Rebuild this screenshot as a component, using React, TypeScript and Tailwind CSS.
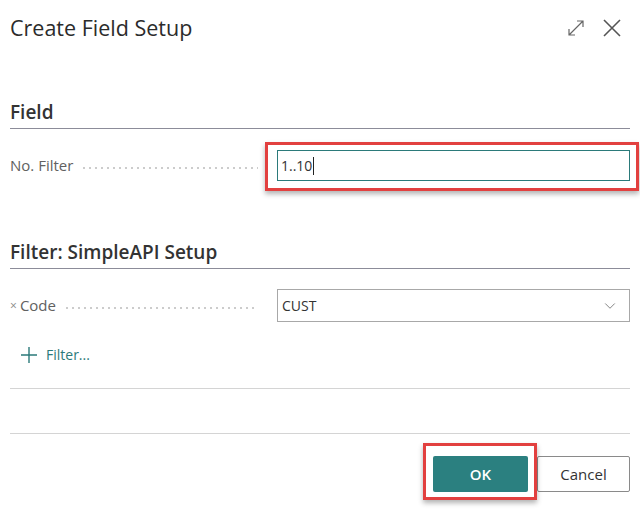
import { ChevronDown } from "lucide-react"

const font = { fontFamily: '"Open Sans", "Noto Sans", Arial, sans-serif' }

const Leader = () => (
	<span className="ml-[8px] mt-[4px] h-[2px] flex-1 bg-[radial-gradient(circle,#cccccc_0.8px,transparent_1px)] bg-[length:6px_2px] bg-repeat-x" />
)

const FieldRow = ({ label, children }: { label: React.ReactNode; children: React.ReactNode }) => (
	<div className="flex items-center">
		<div className="flex w-[248px] items-center text-[15px] text-[#616161]">
			{label}
			<Leader />
		</div>
		<div className="ml-[19px] flex-1">{children}</div>
	</div>
)

const SectionHeader = ({ title }: { title: string }) => (
	<div className="border-b border-[#8c8c99] pb-[4px] text-[19px] font-semibold leading-[24px] text-[#333]">
		{title}
	</div>
)

export default function App() {
	return (
		<div style={font} className="h-[520px] w-[640px] overflow-hidden bg-white px-[10px]">
			<div className="flex items-center justify-between pt-[15px]">
				<h1 className="text-[21.5px] leading-[26px] text-[#2b2b2b]">Create Field Setup</h1>
				<div className="flex items-center gap-[16px] pr-[8px] text-[#666]">
					<svg width="20" height="20" viewBox="0 0 20 20" fill="none" stroke="currentColor" strokeWidth="1.2">
						<path d="M3 17 L17 3 M11 3 H17 V9 M3 11 V17 H9" />
					</svg>
					<svg width="20" height="20" viewBox="0 0 20 20" fill="none" stroke="#555" strokeWidth="1.6">
						<path d="M2 2 L18 18 M18 2 L2 18" />
					</svg>
				</div>
			</div>

			<div className="mt-[59px]">
				<SectionHeader title="Field" />
			</div>

			<div className="mt-[21px]">
				<FieldRow label="No. Filter">
					<div className="relative">
						<div className="flex h-[31px] items-center border border-[#2b7a7a] px-[3px] text-[14px] text-[#333]">
							1..10
							<span className="ml-[1px] h-[18px] w-[1px] bg-[#222]" />
						</div>
						<span className="pointer-events-none absolute -top-[8px] -bottom-[10px] -left-[12px] -right-[9px] border-[3px] border-[#e2403f] shadow-[0_3px_5px_rgba(0,0,0,0.3)]" />
					</div>
				</FieldRow>
			</div>

			<div className="mt-[59px]">
				<SectionHeader title="Filter: SimpleAPI Setup" />
			</div>

			<div className="mt-[20px]">
				<FieldRow
					label={
						<>
							<span className="mr-[3px] text-[12px] text-[#888]">×</span>Code
						</>
					}
				>
					<div className="flex h-[33px] items-center justify-between border border-[#a8a8a8] pl-[4px] pr-[10px] text-[14px] text-[#333]">
						CUST
						<ChevronDown size={18} strokeWidth={1.2} className="text-[#777]" />
					</div>
				</FieldRow>
			</div>

			<div className="mt-[22px] flex items-center pl-[10px] text-[14px] text-[#2b7a7a]">
				<svg width="18" height="18" viewBox="0 0 18 18" stroke="currentColor" strokeWidth="1.4">
					<path d="M9 1 V17 M1 9 H17" />
				</svg>
				<span className="ml-[8px]">Filter...</span>
			</div>

			<div className="mt-[23px] h-[1px] bg-[#d4d4d4]" />
			<div className="mt-[44px] h-[1px] bg-[#d4d4d4]" />

			<div className="mt-[22px] flex justify-end gap-[9px]">
				<div className="relative">
					<button className="h-[36px] w-[95px] rounded-[2px] bg-[#2b8080] text-[15px] font-semibold text-white">OK</button>
					<span className="pointer-events-none absolute -top-[13px] -bottom-[8px] -left-[10px] -right-[9px] border-[3px] border-[#e2403f] shadow-[0_3px_5px_rgba(0,0,0,0.3)]" />
				</div>
				<button className="h-[36px] w-[93px] rounded-[2px] border border-[#8a8a8a] bg-white text-[15px] text-[#333]">Cancel</button>
			</div>
		</div>
	)
}
